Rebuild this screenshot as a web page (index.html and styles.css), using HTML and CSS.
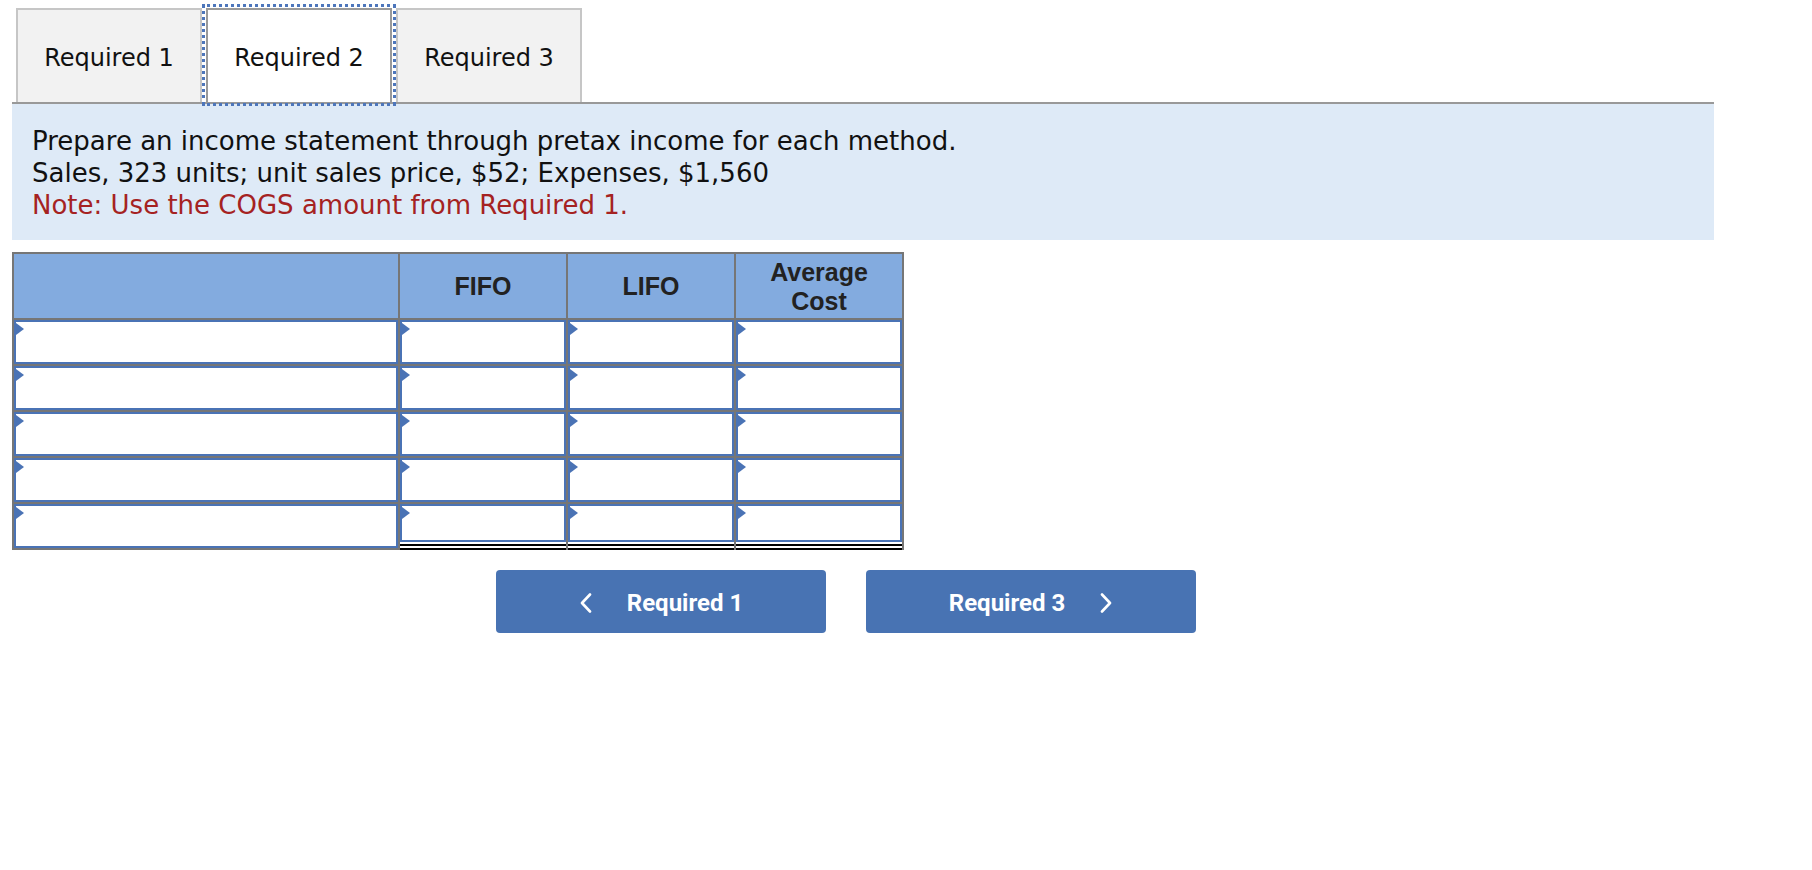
FILE: index.html
```html
<!DOCTYPE html>
<html lang="en">
<head>
<meta charset="utf-8">
<title>Required 2</title>
<link rel="stylesheet" href="styles.css">
</head>
<body>
<div class="page">
  <div class="tabs">
    <div class="tab">Required 1</div>
    <div class="tab active">Required 2</div>
    <div class="tab">Required 3</div>
  </div>
  <div class="panel">
    <p>Prepare an income statement through pretax income for each method.</p>
    <p>Sales, 323 units; unit sales price, $52; Expenses, $1,560</p>
    <p class="note">Note: Use the COGS amount from Required 1.</p>
  </div>
  <div class="grid">
    <div class="head"></div>
    <div class="head">FIFO</div>
    <div class="head">LIFO</div>
    <div class="head">Average<br>Cost</div>

    <div class="cell"><div class="inp"></div></div>
    <div class="cell"><div class="inp"></div></div>
    <div class="cell"><div class="inp"></div></div>
    <div class="cell"><div class="inp"></div></div>

    <div class="cell"><div class="inp"></div></div>
    <div class="cell"><div class="inp"></div></div>
    <div class="cell"><div class="inp"></div></div>
    <div class="cell"><div class="inp"></div></div>

    <div class="cell"><div class="inp"></div></div>
    <div class="cell"><div class="inp"></div></div>
    <div class="cell"><div class="inp"></div></div>
    <div class="cell"><div class="inp"></div></div>

    <div class="cell"><div class="inp"></div></div>
    <div class="cell"><div class="inp"></div></div>
    <div class="cell"><div class="inp"></div></div>
    <div class="cell"><div class="inp"></div></div>

    <div class="cell"><div class="inp"></div></div>
    <div class="cell total"><div class="inp"></div></div>
    <div class="cell total"><div class="inp"></div></div>
    <div class="cell total"><div class="inp"></div></div>
  </div>
  <div class="nav">
    <div class="btn">
      <svg class="chev" width="14" height="20" viewBox="0 0 14 20"><polyline points="11,1.5 3,10 11,18.5" fill="none" stroke="#fff" stroke-width="2.6" stroke-linecap="round" stroke-linejoin="round"/></svg>
      <span>Required 1</span>
    </div>
    <div class="btn">
      <span>Required 3</span>
      <svg class="chev" width="14" height="20" viewBox="0 0 14 20"><polyline points="3,1.5 11,10 3,18.5" fill="none" stroke="#fff" stroke-width="2.6" stroke-linecap="round" stroke-linejoin="round"/></svg>
    </div>
  </div>
</div>
</body>
</html>
```
FILE: styles.css
```css
html, body {
  margin: 0;
  padding: 0;
  background: #fff;
}

body {
  font-family: "DejaVu Sans", Verdana, sans-serif;
  font-size: 24px;
  color: #111;
}

.page {
  width: 1702px;
  padding: 0 12px;
}

.tabs {
  display: flex;
  gap: 4px;
  padding: 8px 0 0 4px;
  border-bottom: 2px solid #999;
}

.tab {
  width: 186px;
  height: 94px;
  box-sizing: border-box;
  background: #f2f2f2;
  border: 2px solid #c6c6c6;
  border-bottom: none;
  display: flex;
  align-items: center;
  justify-content: center;
  padding-top: 4px;
  font-size: 24px;
  color: #111;
}

.tab.active {
  background: #fff;
  border-color: #9a9a9a;
  outline: 3px dotted #4d76bb;
  outline-offset: 1px;
  position: relative;
}

.panel {
  background: #deeaf7;
  height: 136px;
  box-sizing: border-box;
  padding: 21px 20px 0 20px;
}

.panel p {
  margin: 0;
  font-size: 26px;
  line-height: 32px;
}

.panel .note {
  color: #a52222;
}

.grid {
  margin-top: 12px;
  display: grid;
  grid-template-columns: 384px 166px 166px 166px;
  grid-template-rows: 64px repeat(5, 44px);
  gap: 2px;
  width: fit-content;
  background: #767676;
  border: 2px solid #767676;
}

.head {
  background: #83abdf;
  display: flex;
  align-items: center;
  justify-content: center;
  text-align: center;
  font-family: "Liberation Sans", Arial, sans-serif;
  font-weight: 700;
  font-size: 25px;
  line-height: 29px;
  color: #222;
  padding-top: 1px;
}

.cell {
  background: #fff;
  display: flex;
  flex-direction: column;
}

.inp {
  position: relative;
  flex: 1;
  border: 2px solid #4a73b5;
  background: #fff;
}

.inp::before {
  content: "";
  position: absolute;
  left: 0;
  top: 1px;
  border-left: 8px solid #4a73b5;
  border-top: 6px solid transparent;
  border-bottom: 6px solid transparent;
}

.cell.total {
  height: 46px;
  margin-bottom: -2px;
  box-sizing: border-box;
  padding-bottom: 2px;
  border-bottom: 6px double #000;
}

.nav {
  display: flex;
  justify-content: center;
  gap: 40px;
  margin-top: 20px;
  padding-right: 34px;
}

.btn {
  width: 330px;
  height: 63px;
  box-sizing: border-box;
  background: #4873b3;
  border-radius: 4px;
  color: #fff;
  display: flex;
  align-items: center;
  justify-content: center;
  gap: 34px;
  padding-top: 2px;
  font-family: Roboto, "Liberation Sans", sans-serif;
  font-weight: 700;
  font-size: 24px;
}

.chev {
  display: block;
}
```
